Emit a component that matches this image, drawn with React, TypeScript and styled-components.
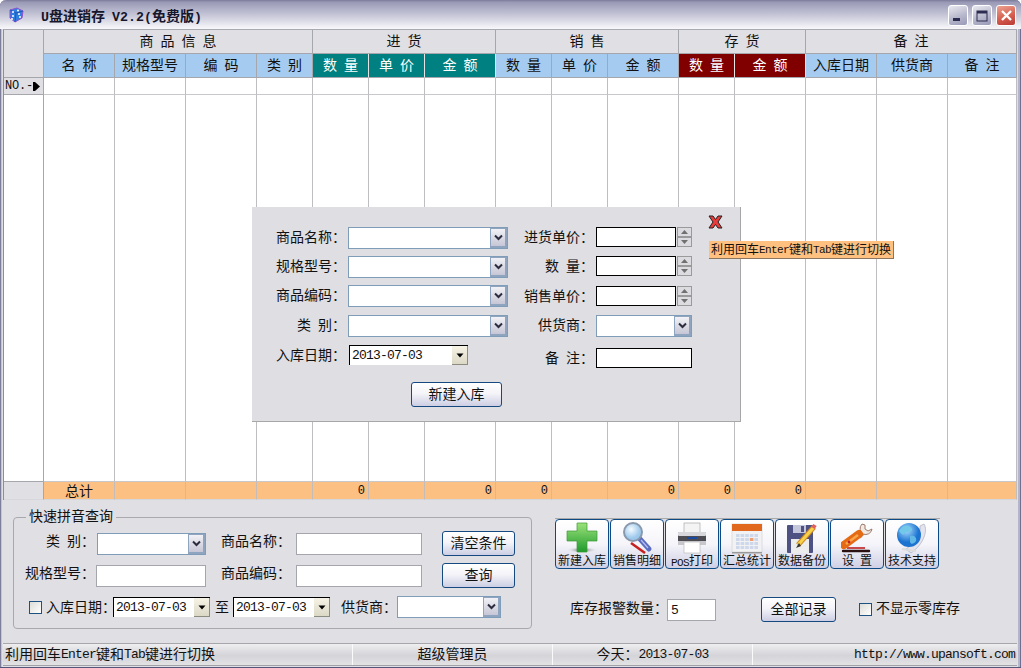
import React from "react";
import styled, { createGlobalStyle } from "styled-components";

const FONT = `"Liberation Mono", "Noto Sans CJK SC", monospace`;

const Global = createGlobalStyle`
  html, body { margin: 0; padding: 0; background: #fff; }
  body { font-family: ${FONT}; font-size: 14px; color: #111; word-spacing: -1.4px; }
  * { box-sizing: border-box; }
`;

const Win = styled.div`
  width: 1021px; height: 668px; position: relative; overflow: hidden;
  display: flex; flex-direction: column;
  background: #dfdfe4;
  border-radius: 6px 6px 0 0;
  padding: 0 4px 2px 3px;
  border-bottom: 1px solid #55557a;
  box-shadow: inset 1px 0 0 #7d7d9c, inset 2px 0 0 #c4c4d6, inset -1px 0 0 #6f6f92, inset -3px 0 0 #b5b5ca;
`;
const TitleBar = styled.div`
  height: 29px; margin: 0 -4px 0 -3px; padding: 0 5px 0 8px; flex: none;
  display: flex; align-items: center;
  border-radius: 6px 6px 0 0;
  background: linear-gradient(180deg, #7c7c9a 0, #9a9ab6 8%, #aeaec6 28%, #c9c9da 55%, #e9e9f0 85%, #f8f8fb 100%);
`;
const TitleText = styled.div`
  margin-left: 17px; font-weight: 700; color: #16162c; font-size: 14px; white-space: pre;
`;
const TitleLat = styled.span`font-size: 13.3px;`;
const Controls = styled.div`margin-left: auto; display: flex; gap: 4px; padding-top: 2px;`;
const CtlBtn = styled.div<{ $close?: boolean }>`
  width: 20px; height: 21px; border-radius: 3px; border: 1px solid #fff;
  display: flex; align-items: center; justify-content: center;
  background: ${(p) => p.$close
    ? "linear-gradient(160deg,#eda391,#d35a4c 60%,#b93a36)"
    : "linear-gradient(160deg,#e9e9f1,#b4b4ca 60%,#9a9ab8)"};
`;

const COLS = [40, 71, 71, 71, 56, 56, 56, 71, 56, 56, 71, 56, 71, 71, 71, 69];
const Table = styled.div`
  height: 471px; flex: none;
  display: grid;
  grid-template-columns: ${COLS.map((c) => c + "px").join(" ")};
  grid-template-rows: 24px 24px 17px 1fr 18px;
  border-top: 1px solid #a9a9b2;
  border-left: 1px solid #8d8d96;
  background: #fff;
`;
const Cell = styled.div`
  border-right: 1px solid #bdbdc2; border-bottom: 1px solid #c8c8cc; background: #fff;
`;
const Corner = styled.div`
  grid-row: span 2; background: #dfdfe4;
  border-right: 1px solid #a6a6ad; border-bottom: 1px solid #a6a6ad;
`;
const Group = styled.div<{ $span: number }>`
  grid-column: span ${(p) => p.$span};
  display: flex; align-items: center; justify-content: center;
  background: #dfdfe4; padding-bottom: 4px;
  border-right: 1px solid #a6a6ad; border-bottom: 1px solid #a6a6ad;
`;
const Sub = styled.div<{ $bg?: string }>`
  display: flex; align-items: center; justify-content: center;
  background: ${(p) => p.$bg || "#a6cbf0"}; padding-bottom: 4px;
  color: ${(p) => (p.$bg ? "#fff" : "#111")};
  border-right: 1px solid ${(p) => (p.$bg ? "#e4e4e4" : "#a6a6ad")};
  border-bottom: 1px solid #a6a6ad;
`;
const Indicator = styled.div`
  display: flex; align-items: center; padding-left: 1px;
  background: #dfdfe4; font-size: 12px; letter-spacing: -0.2px;
  border-right: 1px solid #a6a6ad; border-bottom: 1px solid #a6a6ad;
`;
const LeftBlank = styled.div`background: #fff; border-right: 1px solid #a6a6ad; border-bottom: 1px solid #a6a6ad;`;
const LeftGray = styled.div`background: #dfdfe4; border-right: 1px solid #a6a6ad; border-bottom: 1px solid #d8d8dc;`;
const Total = styled.div<{ $center?: boolean }>`
  display: flex; align-items: center;
  justify-content: ${(p) => (p.$center ? "center" : "flex-end")};
  padding-right: ${(p) => (p.$center ? "0" : "3px")};
  background: #fdc083; font-size: 12px;
  border-right: 1px solid #c3bcb9;
  border-bottom: 1px solid #d5d5dc;
`;
const TotalLabel = styled.span`font-size: 14px; padding-bottom: 2px;`;

const Dialog = styled.div`
  position: absolute; left: 252px; top: 207px; width: 489px; height: 215px;
  background: #dedee3; border-right: 1px solid #a7a7a7; border-bottom: 1px solid #a7a7a7;
  padding: 20px 0 0 24px;
  display: flex; flex-direction: column; z-index: 2;
`;
const FormCols = styled.div`display: flex; height: 143px;`;
const FormCol = styled.div<{ $rows: string; $cols: string; $ml?: number }>`
  display: grid; grid-template-columns: ${(p) => p.$cols}; grid-template-rows: ${(p) => p.$rows};
  margin-left: ${(p) => p.$ml || 0}px; align-items: start;
`;
const FormLabel = styled.div`
  text-align: right; white-space: pre; line-height: 22px; height: 22px; padding-right: 2px;
`;
const CloseX = styled.svg`position: absolute; left: 456px; top: 8px; width: 15px; height: 14px;`;
const Tip = styled.div`
  position: absolute; left: 457px; top: 34px; height: 18px; width: 185px; z-index: 3;
  display: flex; align-items: center; padding: 0 0 2px 2px;
  background: #ffc080; font-size: 12px; white-space: pre;
  border-right: 1px solid #8a7560; border-bottom: 1px solid #8a7560;
`;
const TipLat = styled.span`font-size: 11px; letter-spacing: -0.6px; position: relative; top: 1px;`;

const ComboBox = styled.div<{ $w: number }>`
  width: ${(p) => p.$w}px; height: 22px; display: flex; background: #fff; flex: none;
  border: 1px solid #7f9db9;
`;
const ComboField = styled.div`flex: 1;`;
const ComboBtn = styled.div`
  width: 17px; display: flex; align-items: center; justify-content: center;
  background: linear-gradient(180deg, #f1f1f6, #c6c6d6);
  border: 1px solid #8fa5bf; border-width: 1px 2px 2px 1px;
`;
const DateBox = styled.div<{ $w: number; $ml?: number }>`
  width: ${(p) => p.$w}px; height: 20px; display: flex; background: #fff; flex: none;
  margin-left: ${(p) => p.$ml || 0}px;
  border-top: 1px solid #000; border-left: 1px solid #000;
`;
const DateText = styled.div`
  flex: 1; font-size: 13px; letter-spacing: -0.8px; line-height: 20px; padding-left: 2px;
`;
const DateBtn = styled.div`
  width: 16px; display: flex; align-items: center; justify-content: center;
  background: linear-gradient(180deg, #f6f3e6, #dcd8c6);
  border-right: 1px solid #8c8c80; border-bottom: 1px solid #8c8c80;
`;
const SpinWrap = styled.div`display: flex; height: 20px; gap: 1px;`;
const BlackInput = styled.div<{ $w: number }>`
  width: ${(p) => p.$w}px; height: 20px; background: #fff; border: 1px solid #000;
`;
const Spin = styled.div`
  width: 15px; display: flex; flex-direction: column;
`;
const SpinHalf = styled.div`
  flex: 1; display: flex; align-items: center; justify-content: center;
  background: #dcdce0; border: 1px solid #9a9a9a;
`;
const Btn = styled.button<{ $w: number; $ml?: number }>`
  width: ${(p) => p.$w}px; height: 25px; padding: 0 0 3px; flex: none;
  margin-left: ${(p) => p.$ml || 0}px;
  font: 14px ${FONT}; color: #111;
  border: 1px solid #15497f; border-radius: 3px;
  background: linear-gradient(180deg, #ffffff 0, #f4f4f9 45%, #cdcee3 100%);
`;
const DialogBtn = styled(Btn)`margin: 12px 0 0 135px;`;

const Panel = styled.div`
  height: 143px; flex: none; display: flex; padding-left: 10px; background: #dfdfe4;
`;
const Query = styled.fieldset`
  margin: 9px 0 0 0; padding: 6px 0 0 11px; width: 519px; height: 120px; min-width: 0;
  border: 1px solid #a8a8ad; border-radius: 4px;
`;
const QLegend = styled.legend`
  margin-left: 1px; padding: 0 3px; line-height: 16px; height: 16px;
`;
const QGrid = styled.div`
  display: grid; grid-template-columns: 72px 109px 90px 126px 93px;
  grid-template-rows: 25px 25px; row-gap: 7px; align-items: center;
`;
const QLabel = styled.div<{ $pr: number }>`
  text-align: right; padding: 0 ${(p) => p.$pr}px 7px 0; white-space: pre;
`;
const FlatInput = styled.div<{ $w: number; $ml?: number }>`
  width: ${(p) => p.$w}px; height: 22px; background: #fff; border: 1px solid #a5a5ae;
  margin-left: ${(p) => p.$ml || 0}px; flex: none;
  font-size: 13px; line-height: 22px; padding-left: 3px;
`;
const QBtn = styled(Btn)`justify-self: end;`;
const QRow3 = styled.div`
  display: flex; align-items: center; height: 22px; margin: 8px 0 0 4px;
`;
const Check = styled.div<{ $ml?: number }>`
  width: 13px; height: 13px; flex: none; border: 1px solid #1c5180;
  margin-left: ${(p) => p.$ml || 0}px;
  background: linear-gradient(135deg, #dcdcd7, #fff);
`;
const InlineLabel = styled.div<{ $w: number; $ml?: number; $pb?: number }>`
  width: ${(p) => p.$w}px; margin-left: ${(p) => p.$ml || 0}px; flex: none; white-space: pre;
  padding-bottom: ${(p) => p.$pb ?? 2}px;
`;
const RightCol = styled.div`margin: 18px 0 0 23px; width: 440px;`;
const ToolBar = styled.div`
  display: flex; gap: 1px; width: 385px; border-top: 1px solid #a9a9a9;
`;
const ToolBtn = styled.div`
  width: 54px; height: 50px; flex: none; display: flex; flex-direction: column; align-items: center;
  border: 1px solid #0d4a85; border-radius: 4px;
  background: linear-gradient(180deg, #ffffff 0, #f5f5fa 50%, #cfd0e5 100%);
  padding-top: 2px;
`;
const ToolIcon = styled.svg`width: 32px; height: 32px; flex: none;`;
const ToolLabel = styled.div`
  font-size: 12px; line-height: 14px; margin-top: 1px; white-space: pre;
`;
const ToolLat = styled.span`font-size: 11px; letter-spacing: -0.6px; position: relative; top: 1px;`;
const StockRow = styled.div`
  display: flex; align-items: center; margin: 28px 0 0 15px; height: 25px;
`;
const Status = styled.div`
  height: 23px; flex: none; display: flex; border-top: 1px solid #a7a7ab; border-bottom: 1px solid #a0a0a8;
`;
const Seg = styled.div<{ $w: number; $align?: string; $first?: boolean }>`
  width: ${(p) => p.$w}px; flex: none; display: flex; align-items: center; padding: 0 2px 3px;
  justify-content: ${(p) => p.$align || "center"};
  white-space: pre;
  background: linear-gradient(180deg, #eeeef0, #d4d4d9 55%, #e2e2e5);
  border-left: ${(p) => (p.$first ? "0" : "1px solid #fafafa")};
`;
const Lat = styled.span`font-size: 13px; letter-spacing: -0.8px; position: relative; top: 1px;`;

const Chevron = () => (
  <svg width="9" height="7" viewBox="0 0 9 7"><path d="M1 1.5L4.5 5 8 1.5" fill="none" stroke="#2c2c40" strokeWidth="2" /></svg>
);
const Tri = () => (
  <svg width="8" height="5" viewBox="0 0 8 5"><path d="M0.5 0.5H7.5L4 4.5Z" fill="#000" /></svg>
);
const Combo = ({ w }: { w: number }) => (
  <ComboBox $w={w}><ComboField /><ComboBtn><Chevron /></ComboBtn></ComboBox>
);
const DatePick = ({ w, ml }: { w: number; ml?: number }) => (
  <DateBox $w={w} $ml={ml}><DateText>2013-07-03</DateText><DateBtn><Tri /></DateBtn></DateBox>
);
const SpinInput = () => (
  <SpinWrap>
    <BlackInput $w={80} />
    <Spin>
      <SpinHalf><svg width="7" height="4" viewBox="0 0 7 4"><path d="M0 4L3.5 0 7 4Z" fill="#707070" /></svg></SpinHalf>
      <SpinHalf><svg width="7" height="4" viewBox="0 0 7 4"><path d="M0 0L3.5 4 7 0Z" fill="#707070" /></svg></SpinHalf>
    </Spin>
  </SpinWrap>
);

const PlusIcon = () => (
  <ToolIcon viewBox="0 0 32 32">
    <defs>
      <linearGradient id="gp" x1="0" y1="0" x2="0" y2="1"><stop offset="0" stopColor="#9be27a" /><stop offset="1" stopColor="#1f9a2c" /></linearGradient>
      <radialGradient id="gs"><stop offset="0" stopColor="#555" /><stop offset="1" stopColor="#ddd" stopOpacity="0" /></radialGradient>
    </defs>
    <ellipse cx="16" cy="28" rx="15" ry="3" fill="url(#gs)" />
    <path d="M11 1H21V9H31V19H21V30H11V19H1V9H11Z" fill="url(#gp)" stroke="#3d9a38" strokeWidth="0.7" />
  </ToolIcon>
);
const LensIcon = () => (
  <ToolIcon viewBox="0 0 32 32">
    <defs><radialGradient id="gl" cx="0.4" cy="0.35"><stop offset="0" stopColor="#f4fbff" /><stop offset="1" stopColor="#9cc8ec" /></radialGradient></defs>
    <path d="M10 21L24 31" stroke="#c62020" strokeWidth="2.5" />
    <path d="M19 17L28 27" stroke="#5c6cc0" strokeWidth="5" strokeLinecap="round" />
    <path d="M20 18L27 26" stroke="#b8c0ee" strokeWidth="1.2" />
    <circle cx="12" cy="10" r="9" fill="url(#gl)" stroke="#8a98ac" strokeWidth="2" />
  </ToolIcon>
);
const PrinterIcon = () => (
  <ToolIcon viewBox="0 0 32 32">
    <rect x="8" y="1" width="16" height="10" fill="#f4f4f4" stroke="#aaa" strokeWidth="0.7" />
    <rect x="2" y="10" width="28" height="13" rx="2" fill="#4c4c52" />
    <rect x="2" y="10" width="28" height="4" rx="1" fill="#d8d8dc" />
    <rect x="11" y="15" width="10" height="2" fill="#1a4aa0" />
    <rect x="2" y="19" width="28" height="4" fill="#c8c8cc" />
    <rect x="8" y="20" width="16" height="11" fill="#fff" stroke="#bbb" strokeWidth="0.7" />
  </ToolIcon>
);
const CalIcon = () => (
  <ToolIcon viewBox="0 0 32 32">
    <rect x="1" y="2" width="30" height="28" fill="#f2f2f4" stroke="#ccc" strokeWidth="0.6" />
    <rect x="1" y="2" width="30" height="7" fill="#e0691f" />
    {[0, 1, 2, 3, 4].map((c) =>
      [0, 1, 2, 3].map((r) => (
        <rect key={c + "-" + r} x={5 + c * 4.6} y={12 + r * 4} width="3.6" height="3" fill={c === 3 && r === 1 ? "#f0a070" : "#cdd8ea"} />
      ))
    )}
    <rect x="1" y="30" width="30" height="1.5" fill="#999" />
  </ToolIcon>
);
const DiskIcon = () => (
  <ToolIcon viewBox="0 0 32 32">
    <rect x="1" y="3" width="26" height="28" rx="1" fill="#4d5283" />
    <rect x="7" y="3" width="13" height="8" fill="#c4c6dc" />
    <rect x="15" y="4" width="3" height="6" fill="#4d5283" />
    <rect x="5" y="17" width="18" height="14" fill="#ececec" />
    <path d="M12 23L28 5" stroke="#d08a20" strokeWidth="5" />
    <path d="M12 23L28 5" stroke="#f6d24a" strokeWidth="3" />
    <path d="M27 6L29 3" stroke="#e06060" strokeWidth="4" />
    <path d="M10 26L13 21L15 24Z" fill="#333" />
  </ToolIcon>
);
const WrenchIcon = () => (
  <ToolIcon viewBox="0 0 32 32">
    <path d="M2 29H28" stroke="#2a1010" strokeWidth="2.4" strokeLinecap="round" />
    <path d="M6 26H24" stroke="#c02020" strokeWidth="1.6" />
    <path d="M18 15L25 8" stroke="#a8a0a0" strokeWidth="4" />
    <path d="M21 2a6.500 6.500 0 0 0 1 10a6.500 6.500 0 0 0 9-5L27 9l-3-2V3Z" fill="#f1e9e4" stroke="#a07868" strokeWidth="1" />
    <path d="M3 23L18 12" stroke="#e56a14" strokeWidth="8" strokeLinecap="round" />
    <path d="M5 22L17 13" stroke="#f9a64a" strokeWidth="2.5" />
    <circle cx="8" cy="20" r="1.400" fill="#c02020" />
  </ToolIcon>
);
const GlobeIcon = () => (
  <ToolIcon viewBox="0 0 32 32">
    <defs><radialGradient id="gb" cx="0.4" cy="0.3"><stop offset="0" stopColor="#a8dcff" /><stop offset="1" stopColor="#1c74d0" /></radialGradient></defs>
    <path d="M28 2C32 8 28 22 15 31L10 27C20 20 25 12 24 4Z" fill="#e4e4ee" stroke="#b4b4c4" strokeWidth="0.8" />
    <circle cx="13" cy="13" r="12" fill="url(#gb)" />
    <path d="M8 4C12 3 16 5 16 8C14 11 10 9 8 12C6 14 4 10 3 9C4 7 6 5 8 4Z" fill="#72c8e8" />
    <path d="M14 14C18 13 21 15 20 19C18 22 15 23 14 20Z" fill="#5fb8e6" />
    <path d="M6 27L20 29" stroke="#ddd" strokeWidth="2" />
  </ToolIcon>
);

const TOOLS: { icon: React.ReactNode; label: React.ReactNode }[] = [
  { icon: <PlusIcon />, label: "新建入库" },
  { icon: <LensIcon />, label: "销售明细" },
  { icon: <PrinterIcon />, label: <><ToolLat>POS</ToolLat>打印</> },
  { icon: <CalIcon />, label: "汇总统计" },
  { icon: <DiskIcon />, label: "数据备份" },
  { icon: <WrenchIcon />, label: "设 置" },
  { icon: <GlobeIcon />, label: "技术支持" },
];

const SUBS: { t: string; bg?: string }[] = [
  { t: "名 称" }, { t: "规格型号" }, { t: "编 码" }, { t: "类 别" },
  { t: "数 量", bg: "#008080" }, { t: "单 价", bg: "#008080" }, { t: "金 额", bg: "#008080" },
  { t: "数 量" }, { t: "单 价" }, { t: "金 额" },
  { t: "数 量", bg: "#800000" }, { t: "金 额", bg: "#800000" },
  { t: "入库日期" }, { t: "供货商" }, { t: "备 注" },
];
const ZEROS = new Set([4, 6, 7, 9, 10, 11]);
const blanks = Array.from({ length: 15 }, (_, i) => i);

export default function App() {
  return (
    <Win>
      <Global />
      <TitleBar>
        <svg width="16" height="16" viewBox="0 0 16 16">
          <path d="M2 3L9 1L15 4L14 11L7 15L2 11Z" fill="#2f7fe0" stroke="#9050d0" strokeWidth="1" />
          <path d="M2 3L8 6L15 4M8 6L7 15" fill="none" stroke="#1a4fa8" strokeWidth="0.8" />
          {[[5, 5], [10, 3.500], [11, 7], [12, 10], [5, 9], [4, 12]].map(([x, y], i) => (
            <circle key={i} cx={x} cy={y} r="1" fill="#fff" />
          ))}
        </svg>
        <TitleText><TitleLat>U</TitleLat>盘进销存 <TitleLat>V2.2(</TitleLat>免费版<TitleLat>)</TitleLat></TitleText>
        <Controls>
          <CtlBtn><svg width="12" height="12" viewBox="0 0 12 12"><rect x="1" y="8" width="7" height="3" fill="#2c2c50" /></svg></CtlBtn>
          <CtlBtn><svg width="12" height="12" viewBox="0 0 12 12"><rect x="1" y="1" width="10" height="10" fill="none" stroke="#2c2c50" /><rect x="1" y="1" width="10" height="2.500" fill="#2c2c50" /></svg></CtlBtn>
          <CtlBtn $close><svg width="13" height="13" viewBox="0 0 13 13"><path d="M2 2L11 11M11 2L2 11" stroke="#fff" strokeWidth="2.4" /></svg></CtlBtn>
        </Controls>
      </TitleBar>

      <Table>
        <Corner />
        <Group $span={4}>商 品 信 息</Group>
        <Group $span={3}>进 货</Group>
        <Group $span={3}>销 售</Group>
        <Group $span={2}>存 货</Group>
        <Group $span={3}>备 注</Group>
        {SUBS.map((s, i) => <Sub key={i} $bg={s.bg}>{s.t}</Sub>)}
        <Indicator>
          NO.-
          <svg width="8" height="11" viewBox="0 0 8 11"><rect x="0" y="1" width="2" height="9" fill="#000" /><path d="M2 1L7 5.500L2 10Z" fill="#000" /></svg>
        </Indicator>
        {blanks.map((i) => <Cell key={"a" + i} />)}
        <LeftBlank />
        {blanks.map((i) => <Cell key={"b" + i} />)}
        <LeftGray />
        {blanks.map((i) => (
          <Total key={"t" + i} $center={i === 0}>
            {i === 0 ? <TotalLabel>总计</TotalLabel> : ZEROS.has(i) ? "0" : ""}
          </Total>
        ))}
      </Table>

      <Dialog>
        <CloseX viewBox="0 0 15 14">
          <path d="M1 1H5L7.500 4.500L10 1H14L10 7L14 13H10L7.500 9.500L5 13H1L5 7Z" fill="#e63c3c" stroke="#222" strokeWidth="1" />
        </CloseX>
        <Tip>利用回车<TipLat>Enter</TipLat>键和<TipLat>Tab</TipLat>键进行切换</Tip>
        <FormCols>
          <FormCol $cols="72px 162px" $rows="29px 29px 30px 30px 22px">
            <FormLabel>商品名称：</FormLabel><Combo w={160} />
            <FormLabel>规格型号：</FormLabel><Combo w={160} />
            <FormLabel>商品编码：</FormLabel><Combo w={160} />
            <FormLabel>类 别：</FormLabel><Combo w={160} />
            <FormLabel>入库日期：</FormLabel><DatePick w={119} ml={1} />
          </FormCol>
          <FormCol $cols="73px 96px" $rows="29px 30px 29px 33px 22px" $ml={13}>
            <FormLabel>进货单价：</FormLabel><SpinInput />
            <FormLabel>数 量：</FormLabel><SpinInput />
            <FormLabel>销售单价：</FormLabel><SpinInput />
            <FormLabel>供货商：</FormLabel><Combo w={96} />
            <FormLabel>备 注：</FormLabel><BlackInput $w={96} />
          </FormCol>
        </FormCols>
        <DialogBtn $w={91}>新建入库</DialogBtn>
      </Dialog>

      <Panel>
        <Query>
          <QLegend>快速拼音查询</QLegend>
          <QGrid>
            <QLabel $pr={2}>类 别：</QLabel><Combo w={109} />
            <QLabel $pr={5}>商品名称：</QLabel><FlatInput $w={126} />
            <QBtn $w={73}>清空条件</QBtn>
            <QLabel $pr={2}>规格型号：</QLabel><FlatInput $w={110} $ml={-1} />
            <QLabel $pr={5}>商品编码：</QLabel><FlatInput $w={126} />
            <QBtn $w={73}>查询</QBtn>
          </QGrid>
          <QRow3>
            <Check />
            <InlineLabel $w={67} $ml={4}>入库日期：</InlineLabel>
            <DatePick w={97} />
            <InlineLabel $w={14} $ml={5}>至</InlineLabel>
            <DatePick w={97} ml={4} />
            <InlineLabel $w={56} $ml={11}>供货商：</InlineLabel>
            <Combo w={104} />
          </QRow3>
        </Query>
        <RightCol>
          <ToolBar>
            {TOOLS.map((t, i) => (
              <ToolBtn key={i}>{t.icon}<ToolLabel>{t.label}</ToolLabel></ToolBtn>
            ))}
          </ToolBar>
          <StockRow>
            <InlineLabel $w={98} $pb={5}>库存报警数量：</InlineLabel>
            <FlatInput $w={49} $ml={-1}>5</FlatInput>
            <Btn $w={75} $ml={45}>全部记录</Btn>
            <Check $ml={23} />
            <InlineLabel $w={90} $ml={4} $pb={5}>不显示零库存</InlineLabel>
          </StockRow>
        </RightCol>
      </Panel>

      <Status>
        <Seg $w={349} $align="flex-start" $first>利用回车<Lat>Enter</Lat>键和<Lat>Tab</Lat>键进行切换</Seg>
        <Seg $w={200}>超级管理员</Seg>
        <Seg $w={200}>今天：<Lat>2013-07-03</Lat></Seg>
        <Seg $w={265} $align="flex-end"><Lat>http://www.upansoft.com</Lat></Seg>
      </Status>
    </Win>
  );
}
